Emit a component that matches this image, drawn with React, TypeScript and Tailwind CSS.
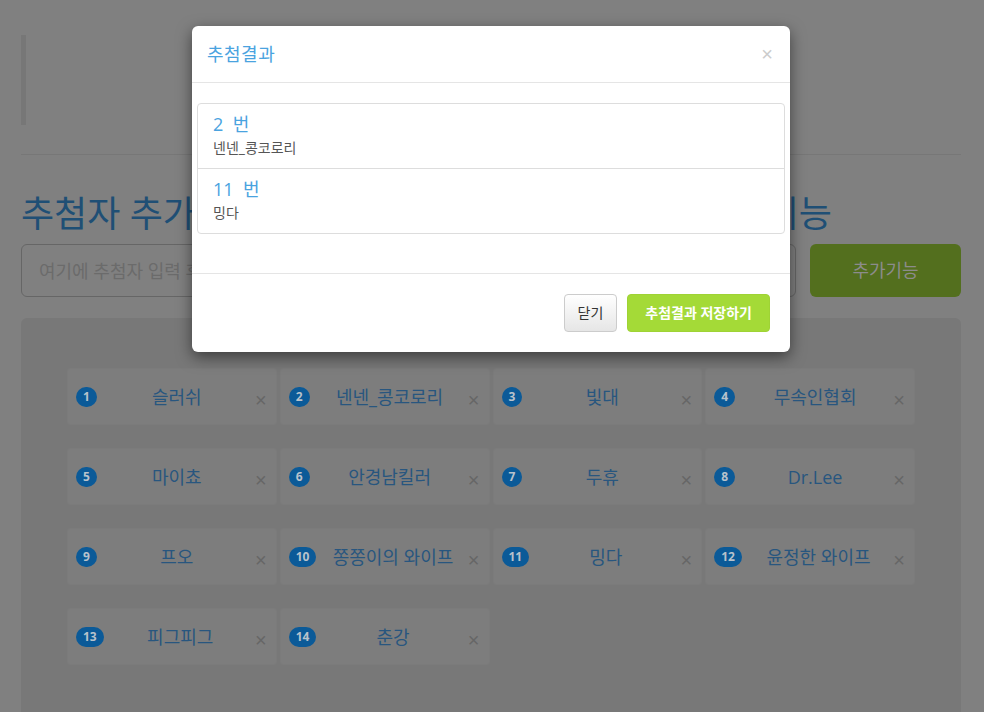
const entrants = [
  "슬러쉬",
  "넨넨_콩코로리",
  "빛대",
  "무속인협회",
  "마이쵸",
  "안경남킬러",
  "두휴",
  "Dr.Lee",
  "프오",
  "쫑쫑이의 와이프",
  "밍다",
  "윤정한 와이프",
  "피그피그",
  "춘강",
];

const winners = [
  { no: 2, name: "넨넨_콩코로리" },
  { no: 11, name: "밍다" },
];

const font = { fontFamily: '"Open Sans", "Noto Sans CJK KR", sans-serif' };

function EntrantCard({ no, name }: { no: number; name: string }) {
  return (
    <div className="flex h-[57px] items-center rounded-[3px] border border-[#7b7b7b] bg-[#7d7d7d] pl-[8px] pr-[11px]">
      <span className="flex h-[20px] min-w-[20px] items-center justify-center rounded-full bg-[#0b5a98] px-[7px] text-[12px] font-bold leading-none text-[#b8c2cc]">
        {no}
      </span>
      <span className="flex-1 truncate text-center text-[18px] leading-[24px] text-[#28567f]">{name}</span>
      <span className="mt-[6px] flex w-[8px] justify-center text-[20px] leading-none text-[#666666]" style={{ fontFamily: '"Liberation Sans", sans-serif' }}>
        ×
      </span>
    </div>
  );
}

function ResultModal() {
  return (
    <div className="absolute left-[192px] top-[26px] w-[598px] rounded-[6px] bg-white shadow-[0_5px_15px_rgba(0,0,0,0.5)]">
      <div className="flex h-[57px] items-center justify-between border-b border-[#e5e5e5] px-[15px]">
        <h4 className="text-[18px] leading-[26px] tracking-[0.5px] text-[#4aa3df]">추첨결과</h4>
        <span className="mr-[2px] text-[20px] leading-none text-[#cccccc]" style={{ fontFamily: '"Liberation Sans", sans-serif' }}>
          ×
        </span>
      </div>

      <div className="px-[5px] pb-[39px] pt-[20px]">
        <div className="rounded-[4px] border border-[#dddddd]">
          {winners.map((w, i) => (
            <div key={w.no} className={["px-[15px] py-[10px]", i > 0 ? "border-t border-[#dddddd]" : ""].join(" ")}>
              <div className="mb-[4px] text-[18px] leading-[20px] text-[#4aa3df]">
                {w.no}&nbsp; 번
              </div>
              <div className="text-[14px] leading-[20px] text-[#555555]">{w.name}</div>
            </div>
          ))}
        </div>
      </div>

      <div className="flex justify-end gap-[10px] border-t border-[#e5e5e5] px-[20px] py-[20px]">
        <button className="rounded-[4px] border border-[#cccccc] bg-gradient-to-b from-white to-[#e6e6e6] px-[13px] py-[8px] text-[14px] leading-[20px] text-[#333333]">
          닫기
        </button>
        <button className="rounded-[4px] border border-[#9fd335] bg-[#a4da37] px-[17px] py-[8px] text-[14px] font-bold leading-[20px] text-white">
          추첨결과 저장하기
        </button>
      </div>
    </div>
  );
}

export default function App() {
  return (
    <div className="relative h-[712px] w-[984px] overflow-hidden bg-[#808080]" style={font}>
      <div className="ml-[21px] w-[940px]">
        <div className="mt-[35px] h-[90px] border-l-[5px] border-[#777777]" />
        <hr className="mt-[29px] border-t border-[#777777]" />

        <h1 className="mt-[39px] flex h-[40px] w-[811px] justify-between whitespace-nowrap text-[36px] leading-[40px] text-[#1f4f75]">
          <span>추첨자 추가 및 추첨결과 저장</span>
          <span>여러 부가기능</span>
        </h1>

        <div className="mt-[10px] flex gap-[14px]">
          <input
            className="h-[53px] flex-1 rounded-[6px] border border-[#666666] bg-[#808080] px-[17px] text-[18px] outline-none placeholder:text-[#6b6b6b]"
            placeholder="여기에 추첨자 입력 후 엔터를 누르세요"
          />
          <button className="h-[53px] w-[151px] rounded-[6px] bg-[#536f1e] text-[18px] text-[#8c8c8c]">추가기능</button>
        </div>

        <div className="mt-[21px] rounded-t-[6px] bg-[#787878] px-[46px] pb-[60px] pt-[50px]">
          <div className="grid grid-cols-4 gap-x-[3px] gap-y-[23px]">
            {entrants.map((name, i) => (
              <EntrantCard key={name} no={i + 1} name={name} />
            ))}
          </div>
        </div>
      </div>

      <ResultModal />
    </div>
  );
}
